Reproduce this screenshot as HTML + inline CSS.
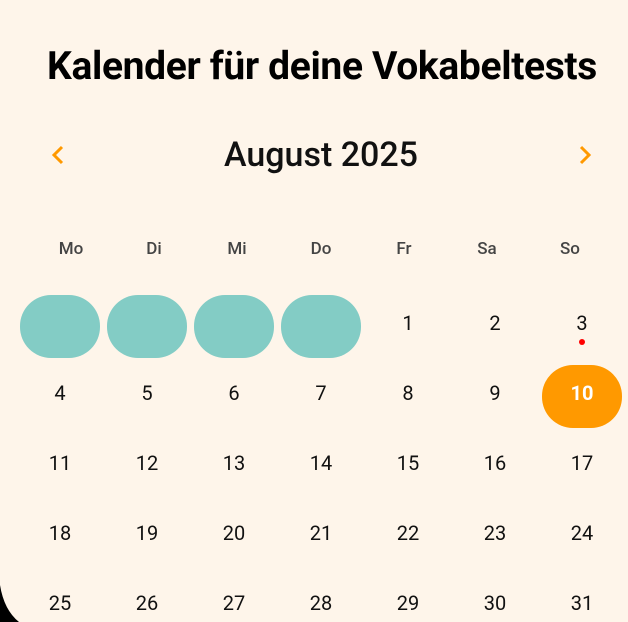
<!DOCTYPE html>
<html><head><style>
html,body{margin:0;padding:0;width:628px;height:622px;overflow:hidden;background:#FEF5EA;}
.wrap{position:absolute;left:0;top:0;width:628px;height:622px;overflow:hidden;background:#FEF5EA;font-family:"Roboto","Liberation Sans",sans-serif;}
.t{position:absolute;left:0;width:644px;text-align:center;font-weight:bold;font-size:39px;top:43px;color:#000;letter-spacing:-0.35px}
.m{position:absolute;left:0;width:642px;text-align:center;font-size:34px;font-weight:500;top:135px;color:#111}
.wd{position:absolute;top:239px;width:80px;margin-left:-40px;text-align:center;font-size:17px;font-weight:500;color:#444}
.d{position:absolute;width:80px;height:63px;margin-left:-40px;margin-top:-31px;line-height:63px;text-align:center;font-size:20px;color:#111;border-radius:31px}
.teal{background:#83CCC5}
.or{background:#FF9900;color:#fff;font-weight:bold}
</style></head><body><div class="wrap">
<div class="t">Kalender für deine Vokabeltests</div>
<div class="m">August 2025</div>
<svg style="position:absolute;left:50px;top:145px" width="16" height="20"><path d="M12 2 L4 10 L12 18" stroke="#FF9900" stroke-width="3" fill="none"/></svg>
<svg style="position:absolute;left:577px;top:145px" width="16" height="20"><path d="M4 2 L12 10 L4 18" stroke="#FF9900" stroke-width="3" fill="none"/></svg>
<div class="wd" style="left:71px">Mo</div><div class="wd" style="left:154px">Di</div><div class="wd" style="left:237px">Mi</div><div class="wd" style="left:321px">Do</div><div class="wd" style="left:404px">Fr</div><div class="wd" style="left:487px">Sa</div><div class="wd" style="left:570px">So</div>
<div class="d teal" style="left:60px;top:326px"></div>
<div class="d teal" style="left:147px;top:326px"></div>
<div class="d teal" style="left:234px;top:326px"></div>
<div class="d teal" style="left:321px;top:326px"></div>
<div class="d" style="left:408px;top:323px">1</div>
<div class="d" style="left:495px;top:323px">2</div>
<div class="d" style="left:582px;top:323px">3</div>
<div style="position:absolute;left:579px;top:339px;width:6px;height:6px;border-radius:3px;background:#f00"></div>
<div class="d" style="left:60px;top:393px">4</div><div class="d" style="left:147px;top:393px">5</div><div class="d" style="left:234px;top:393px">6</div><div class="d" style="left:321px;top:393px">7</div><div class="d" style="left:408px;top:393px">8</div><div class="d" style="left:495px;top:393px">9</div><div class="d or" style="left:582px;top:396px;line-height:57px">10</div>
<div class="d" style="left:60px;top:463px">11</div><div class="d" style="left:147px;top:463px">12</div><div class="d" style="left:234px;top:463px">13</div><div class="d" style="left:321px;top:463px">14</div><div class="d" style="left:408px;top:463px">15</div><div class="d" style="left:495px;top:463px">16</div><div class="d" style="left:582px;top:463px">17</div>
<div class="d" style="left:60px;top:533px">18</div><div class="d" style="left:147px;top:533px">19</div><div class="d" style="left:234px;top:533px">20</div><div class="d" style="left:321px;top:533px">21</div><div class="d" style="left:408px;top:533px">22</div><div class="d" style="left:495px;top:533px">23</div><div class="d" style="left:582px;top:533px">24</div>
<div class="d" style="left:60px;top:603px">25</div><div class="d" style="left:147px;top:603px">26</div><div class="d" style="left:234px;top:603px">27</div><div class="d" style="left:321px;top:603px">28</div><div class="d" style="left:408px;top:603px">29</div><div class="d" style="left:495px;top:603px">30</div><div class="d" style="left:582px;top:603px">31</div>
<svg style="position:absolute;left:0;top:580px" width="30" height="42"><path d="M0 5 Q4 30 19 42 L0 42 Z" fill="#000"/></svg>
</div></body></html>
